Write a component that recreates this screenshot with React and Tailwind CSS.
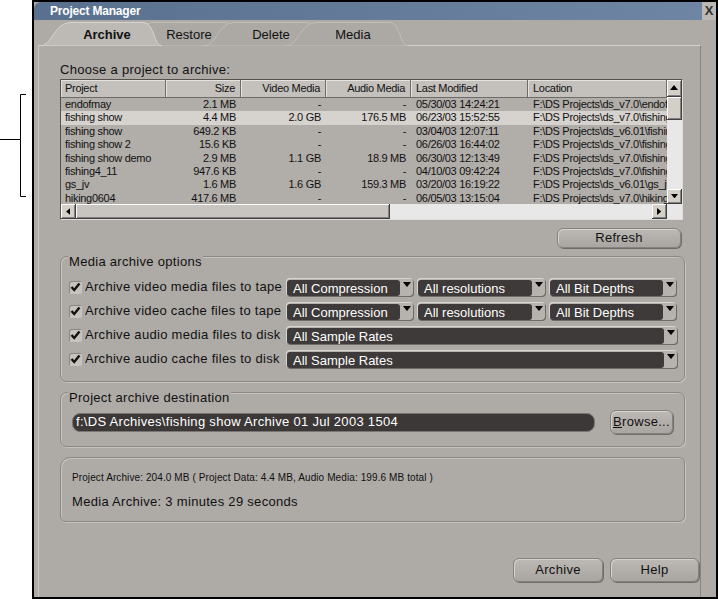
import React from 'react';

const font = "font-['Liberation_Sans',Arial,sans-serif]";

const columnas = [
  { nombre: 'Project', w: 'w-[105px]', alinear: 'text-left pl-[4px]' },
  { nombre: 'Size', w: 'w-[75px]', alinear: 'text-right pr-[5px]' },
  { nombre: 'Video Media', w: 'w-[85px]', alinear: 'text-right pr-[5px]' },
  { nombre: 'Audio Media', w: 'w-[85px]', alinear: 'text-right pr-[5px]' },
  { nombre: 'Last Modified', w: 'w-[117px]', alinear: 'text-left pl-[5px]' },
  { nombre: 'Location', w: 'w-[139px]', alinear: 'text-left pl-[5px]' },
];

const proyectos = [
  ['endofmay', '2.1 MB', '-', '-', '05/30/03 14:24:21', 'F:\\DS Projects\\ds_v7.0\\endofmay'],
  ['fishing show', '4.4 MB', '2.0 GB', '176.5 MB', '06/23/03 15:52:55', 'F:\\DS Projects\\ds_v7.0\\fishing show'],
  ['fishing show', '649.2 KB', '-', '-', '03/04/03 12:07:11', 'F:\\DS Projects\\ds_v6.01\\fishing show'],
  ['fishing show 2', '15.6 KB', '-', '-', '06/26/03 16:44:02', 'F:\\DS Projects\\ds_v7.0\\fishing show 2'],
  ['fishing show demo', '2.9 MB', '1.1 GB', '18.9 MB', '06/30/03 12:13:49', 'F:\\DS Projects\\ds_v7.0\\fishing show demo'],
  ['fishing4_11', '947.6 KB', '-', '-', '04/10/03 09:42:24', 'F:\\DS Projects\\ds_v7.0\\fishing4_11'],
  ['gs_jv', '1.6 MB', '1.6 GB', '159.3 MB', '03/20/03 16:19:22', 'F:\\DS Projects\\ds_v6.01\\gs_jv'],
  ['hiking0604', '417.6 MB', '-', '-', '06/05/03 13:15:04', 'F:\\DS Projects\\ds_v7.0\\hiking0604'],
];

const Triangulo = ({ dir = 'down', size = 7 }) => {
  const lateral = dir === 'left' || dir === 'right';
  const pts = {
    down: '0,0 8,0 4,5',
    up: '0,5 8,5 4,0',
    left: '5,0 5,8 0,4',
    right: '0,0 0,8 5,4',
  }[dir];
  return (
    <svg
      width={lateral ? size * 0.65 : size}
      height={lateral ? size : size * 0.65}
      viewBox={lateral ? '0 0 5 8' : '0 0 8 5'}
    >
      <polygon points={pts} fill="#000" />
    </svg>
  );
};

const bisel = 'bg-[#d4d0c8] border-r border-b border-[#404040] shadow-[inset_1px_1px_0_#ffffff,inset_-1px_-1px_0_#808080]';

const BotonScroll = ({ dir }) => (
  <div className={`w-[15px] h-[15px] flex items-center justify-center ${bisel}`}>
    <Triangulo dir={dir} size={7} />
  </div>
);

const Tab = ({ label, activo, ml }) => (
  <div className={`relative w-[122px] h-[25px] ${ml} ${activo ? 'z-10' : ''}`}>
    <svg className="absolute inset-0" width="122" height="25" viewBox="0 0 122 25">
      <path
        d="M0 25 C12 25 14 2 30 1.5 L104 1.5 C114 2 114 25 122 25 Z"
        fill={activo ? '#bdb9b5' : '#aca8a4'}
        stroke={activo ? '#d8d4d0' : '#c2beba'}
        strokeWidth="1"
      />
    </svg>
    <span className={`relative flex h-full items-center justify-center pl-[12px] pt-[3px] text-[13px] text-[#111] ${activo ? 'font-bold' : ''}`}>
      {label}
    </span>
  </div>
);

const Desplegable = ({ texto, ancho }) => (
  <div className={`${ancho} h-[18px] flex items-stretch rounded-[4px] bg-[#b6b2ae] shadow-[inset_1px_1px_0_#d8d4d0,1px_1px_0_#6e6a66] pt-[2px] pl-[1px]`}>
    <div className="flex-1 flex items-center rounded-[3px] bg-[#3d3a39] pl-[6px] text-[13px] leading-none text-white">
      {texto}
    </div>
    <div className="w-[13px] flex items-start justify-center pt-[2px]">
      <Triangulo dir="down" size={8} />
    </div>
  </div>
);

const Casilla = () => (
  <div className="w-[13px] h-[13px] rounded-[2px] bg-[#c6c2be] shadow-[inset_1px_1px_0_#8a8682] flex items-center justify-center">
    <svg width="11" height="10" viewBox="0 0 11 10">
      <path d="M1.5 5 L4.2 8 L9.5 1.5" stroke="#111" strokeWidth="2.4" fill="none" />
    </svg>
  </div>
);

const Boton = ({ children, clase = '' }) => (
  <div className={`flex items-center justify-center rounded-[6px] bg-gradient-to-b from-[#bcb8b4] to-[#a9a5a1] border border-[#858180] shadow-[inset_1px_1px_0_#d6d2ce,1px_1px_0_#6f6b67] text-[13px] text-[#111] ${clase}`}>
    {children}
  </div>
);

const FilaOpcion = ({ label, children }) => (
  <div className="h-[24px] flex items-center">
    <div className="w-[225px] flex items-center pl-[8px]">
      <Casilla />
      <span className="ml-[3px] text-[13px] text-[#111] whitespace-nowrap">{label}</span>
    </div>
    <div className="flex items-center gap-[4px] tracking-normal">{children}</div>
  </div>
);

const grupo = 'rounded-[7px] border border-[#8c8884] shadow-[inset_1px_1px_0_#c6c2be,1px_1px_0_#c6c2be] flex flex-col';
const leyenda = '-mt-[3px] ml-[7px] px-[1px] h-[16px] leading-[16px] w-fit bg-[#aeaaa6] text-[13px] text-[#111]';

export default function App() {
  return (
    <div className={`flex w-[718px] h-[599px] bg-white tracking-[0.3px] ${font}`}>
      {/* marca lateral */}
      <div className="w-[32px] shrink-0">
        <svg width="32" height="200" viewBox="0 0 32 200">
          <path d="M26 94.5 H20.5 V196.5 H26 M0 139.5 H20.5" stroke="#000" strokeWidth="1" fill="none" />
        </svg>
      </div>

      {/* ventana */}
      <div className="w-[686px] h-[599px] border-2 border-black bg-[#aeaaa6] flex flex-col">
        {/* barra de titulo */}
        <div className="h-[18px] flex">
          <div className="flex-1 rounded-tl-[7px] bg-gradient-to-r from-[#59718f] to-[#6e86a4] flex items-center pl-[16px]">
            <span className="text-[12px] font-bold text-white tracking-[-0.2px]">Project Manager</span>
          </div>
          <div className="w-[14px] flex items-center justify-center bg-[#bcb8b4] text-[13px] font-bold text-[#333] tracking-normal">X</div>
        </div>

        {/* pestañas */}
        <div className="h-[26px] flex items-end pl-[6px] -mb-[1px] tracking-normal">
          <Tab label="Archive" activo ml="" />
          <Tab label="Restore" ml="-ml-[40px]" />
          <Tab label="Delete" ml="-ml-[40px]" />
          <Tab label="Media" ml="-ml-[40px]" />
        </div>

        {/* panel */}
        <div className="ml-[4px] w-[663px] flex-1 border-t border-l border-r border-t-[#d6d2ce] border-l-[#c8c4c0] border-r-[#86827e] flex flex-col">
          <div className="pl-[21px] w-[646px] flex flex-col">
            <div className="pt-[16px] leading-[16px] text-[13px] text-[#111]">Choose a project to archive:</div>

            {/* tabla de proyectos */}
            <div className="mt-[1px] w-[623px] h-[141px] border border-t-[#55514d] border-l-[#55514d] border-r-[#e0dcd8] border-b-[#e0dcd8] flex flex-col text-[11px] tracking-[-0.3px] text-[#111]">
              <div className="flex h-[124px]">
                <div className="w-[606px] flex flex-col">
                  <div className="flex h-[18px] shrink-0">
                    {columnas.map((c) => (
                      <div
                        key={c.nombre}
                        className={`${c.w} ${c.alinear} leading-[17px] bg-[#c4c0bc] border-r border-b border-[#6f6b67] shadow-[inset_1px_1px_0_#e6e2de] whitespace-nowrap overflow-hidden`}
                      >
                        {c.nombre}
                      </div>
                    ))}
                  </div>
                  <div className="flex-1 bg-[#b1ada9] overflow-hidden">
                    {proyectos.map((fila, i) => (
                      <div key={i} className={`flex h-[13.4px] leading-[13.4px] ${i === 1 ? 'bg-[#d6d2ce]' : ''}`}>
                        {fila.map((valor, j) => (
                          <div key={j} className={`${columnas[j].w} ${columnas[j].alinear} whitespace-nowrap overflow-hidden`}>
                            {valor}
                          </div>
                        ))}
                      </div>
                    ))}
                  </div>
                </div>
                <div className="w-[15px] flex flex-col bg-[#e8e8e8]">
                  <div className={`h-[17px] flex items-center justify-center ${bisel}`}>
                    <Triangulo dir="up" size={8} />
                  </div>
                  <div className={`h-[23px] ${bisel}`} />
                  <div className="flex-1" />
                  <BotonScroll dir="down" />
                </div>
              </div>
              <div className="flex h-[15px] bg-[#e8e8e8]">
                <BotonScroll dir="left" />
                <div className="w-[314px] bg-[#c8c4c0] border-r border-b border-[#404040] shadow-[inset_1px_1px_0_#ffffff,inset_-1px_-1px_0_#808080]" />
                <div className="w-[262px]" />
                <BotonScroll dir="right" />
                <div className="w-[15px] bg-[#e8e8e8]" />
              </div>
            </div>

            <Boton clase="mt-[8px] self-end mr-[4px] w-[124px] h-[20px]">Refresh</Boton>

            {/* opciones de medios */}
            <div className={`mt-[8px] w-[625px] h-[126px] ${grupo}`}>
              <div className={leyenda}>Media archive options</div>
              <div className="mt-[5px] flex flex-col">
                <FilaOpcion label="Archive video media files to tape">
                  <Desplegable texto="All Compression" ancho="w-[127px]" />
                  <Desplegable texto="All resolutions" ancho="w-[128px]" />
                  <Desplegable texto="All Bit Depths" ancho="w-[127px]" />
                </FilaOpcion>
                <FilaOpcion label="Archive video cache files to tape">
                  <Desplegable texto="All Compression" ancho="w-[127px]" />
                  <Desplegable texto="All resolutions" ancho="w-[128px]" />
                  <Desplegable texto="All Bit Depths" ancho="w-[127px]" />
                </FilaOpcion>
                <FilaOpcion label="Archive audio media files to disk">
                  <Desplegable texto="All Sample Rates" ancho="w-[391px]" />
                </FilaOpcion>
                <FilaOpcion label="Archive audio cache files to disk">
                  <Desplegable texto="All Sample Rates" ancho="w-[391px]" />
                </FilaOpcion>
              </div>
            </div>

            {/* destino */}
            <div className={`mt-[10px] w-[625px] h-[55px] ${grupo}`}>
              <div className={leyenda}>Project archive destination</div>
              <div className="mt-[4px] h-[24px] flex items-center pl-[11px]">
                <div className="w-[523px] h-[19px] rounded-[8px] bg-[#3b3837] border border-[#7a7672] flex items-center pl-[3px] text-[13px] text-white whitespace-nowrap">
                  f:\DS Archives\fishing show Archive 01 Jul 2003 1504
                </div>
                <Boton clase="ml-[15px] w-[63px] h-[24px]">
                  <span><span className="underline">B</span>rowse...</span>
                </Boton>
              </div>
            </div>

            {/* resumen */}
            <div className="mt-[10px] w-[625px] h-[65px] rounded-[6px] rounded-tl-[10px] border border-[#8c8884] shadow-[inset_1px_1px_0_#c6c2be,1px_1px_0_#c6c2be] flex flex-col pl-[11px] text-[#111]">
              <div className="pt-[14px] h-[26px] leading-[12px] text-[10px] tracking-[0.1px] whitespace-nowrap">
                Project Archive: 204.0 MB ( Project Data: 4.4 MB, Audio Media: 199.6 MB total )
              </div>
              <div className="mt-[10px] leading-[16px] text-[13px]">Media Archive: 3 minutes 29 seconds</div>
            </div>
          </div>

          {/* acciones */}
          <div className="mt-[36px] flex justify-end gap-[7px] pr-[1px]">
            <Boton clase="w-[90px] h-[24px]">Archive</Boton>
            <Boton clase="w-[89px] h-[24px]">Help</Boton>
          </div>
        </div>
      </div>
    </div>
  );
}
